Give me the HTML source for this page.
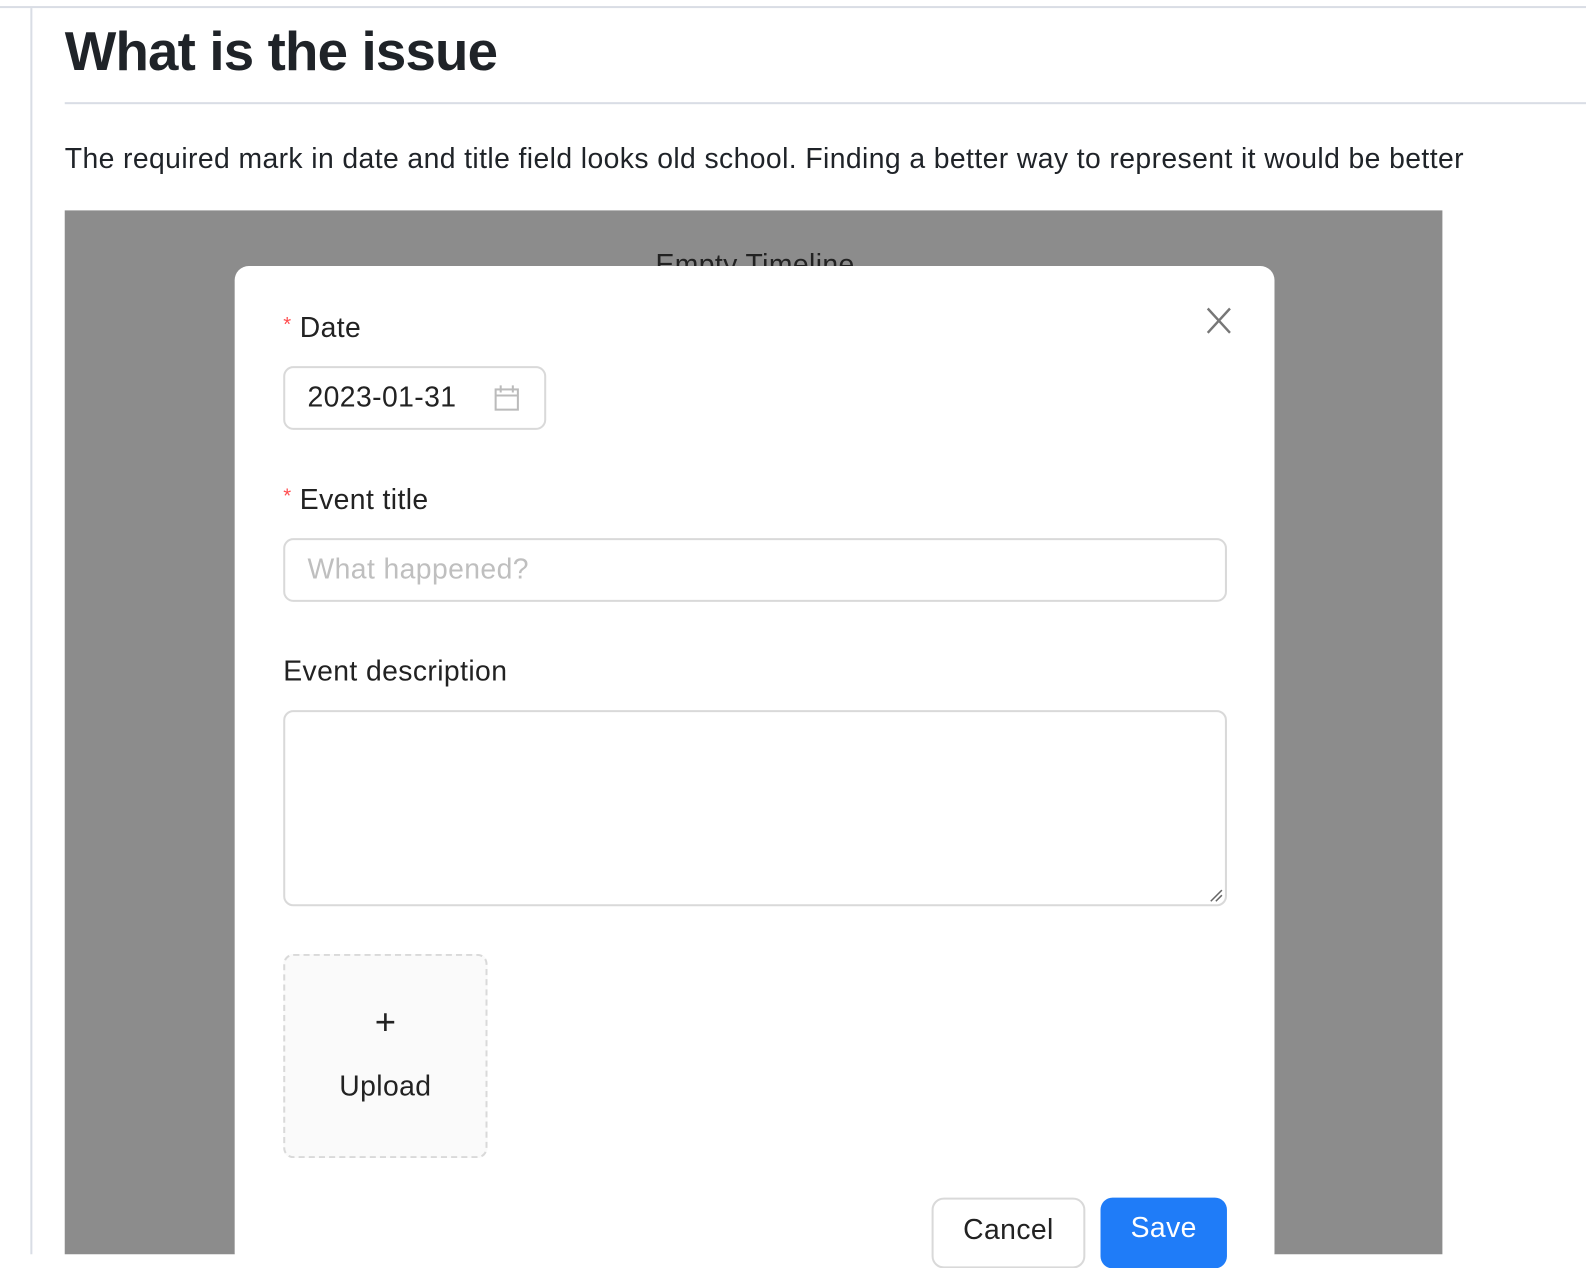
<!DOCTYPE html>
<html><head><style>
*{margin:0;padding:0;box-sizing:border-box}
body{width:1586px;height:1240px;overflow:hidden;background:#fff;position:relative;font-family:"Liberation Sans",sans-serif;color:#1f2328}
.a{position:absolute}
#w{position:absolute;left:0;top:0;width:1568px;height:1226px;transform:scale(1.0115);transform-origin:0 0}
.t{font-size:28px;letter-spacing:0.4px}
</style></head><body>
<div id="w">
<div class="a" style="left:0;top:6px;width:1568px;height:2px;background:#d9dde5"></div>
<div class="a" style="left:30px;top:8px;width:2px;height:1232px;background:#d9dde5"></div>
<div class="a" style="left:64px;top:20px;font-size:54px;font-weight:bold;letter-spacing:-0.8px;color:#1f2328">What is the issue</div>
<div class="a" style="left:64px;top:101px;width:1522px;height:2px;background:#d9dde5"></div>
<div class="a" style="left:64px;top:141px;font-size:28px;color:#1f2328;letter-spacing:0.4px">The required mark in date and title field looks old school. Finding a better way to represent it would be better</div>
<div class="a" style="left:64px;top:208px;width:1362px;height:1032px;background:#8c8c8c;overflow:hidden">
 <div class="a t" style="left:584px;top:38px;color:#222">Empty Timeline</div>
</div>
<div class="a" style="left:232px;top:263px;width:1028px;height:990px;background:#fff;border-radius:14px">
 <div class="a t" style="left:48px;top:45px;color:#222"><span style="color:#ff4d4f;font-size:20px;vertical-align:6px">*</span> Date</div>
 <svg class="a" style="left:960px;top:40px" width="26" height="28" viewBox="0 0 26 28"><path d="M2 2L24 26M24 2L2 26" stroke="#777" stroke-width="2.4" fill="none"/></svg>
 <div class="a" style="left:48px;top:99px;width:260px;height:63px;border:2px solid #d9d9d9;border-radius:10px">
  <div class="a t" style="left:22px;top:13px;color:#222">2023-01-31</div>
  <svg class="a" style="left:206px;top:16px" width="26" height="28" viewBox="0 0 26 28"><rect x="2" y="5" width="22" height="20" fill="none" stroke="#bbb" stroke-width="2"/><path d="M2 11H24M7 1V8M19 1V8" stroke="#bbb" stroke-width="2"/></svg>
 </div>
 <div class="a t" style="left:48px;top:215px;color:#222"><span style="color:#ff4d4f;font-size:20px;vertical-align:6px">*</span> Event title</div>
 <div class="a" style="left:48px;top:269px;width:933px;height:63px;border:2px solid #d9d9d9;border-radius:10px">
  <div class="a t" style="left:22px;top:13px;color:#bfbfbf">What happened?</div>
 </div>
 <div class="a t" style="left:48px;top:385px;color:#222">Event description</div>
 <div class="a" style="left:48px;top:439px;width:933px;height:194px;border:2px solid #d9d9d9;border-radius:10px">
  <svg class="a" style="right:2px;bottom:2px" width="14" height="14"><path d="M2 13L13 2M7 13L13 7" stroke="#666" stroke-width="1.5"/></svg>
 </div>
 <div class="a" style="left:48px;top:680px;width:202px;height:202px;border:2px dashed #d9d9d9;border-radius:10px;background:#fafafa">
  <div class="a" style="left:0;width:198px;top:44px;text-align:center;font-size:36px;color:#222;font-weight:300">+</div>
  <div class="a t" style="left:0;width:198px;top:113px;text-align:center;color:#222">Upload</div>
 </div>
 <div class="a" style="left:689px;top:921px;width:152px;height:70px;border:2px solid #d9d9d9;border-radius:12px;background:#fff">
  <div class="a t" style="left:0;width:148px;top:14px;text-align:center;color:#222">Cancel</div>
 </div>
 <div class="a" style="left:856px;top:921px;width:125px;height:70px;border-radius:12px;background:#1f7cf8">
  <div class="a t" style="left:0;width:125px;top:14px;text-align:center;color:#fff">Save</div>
 </div>
</div>
</div>
</body></html>
